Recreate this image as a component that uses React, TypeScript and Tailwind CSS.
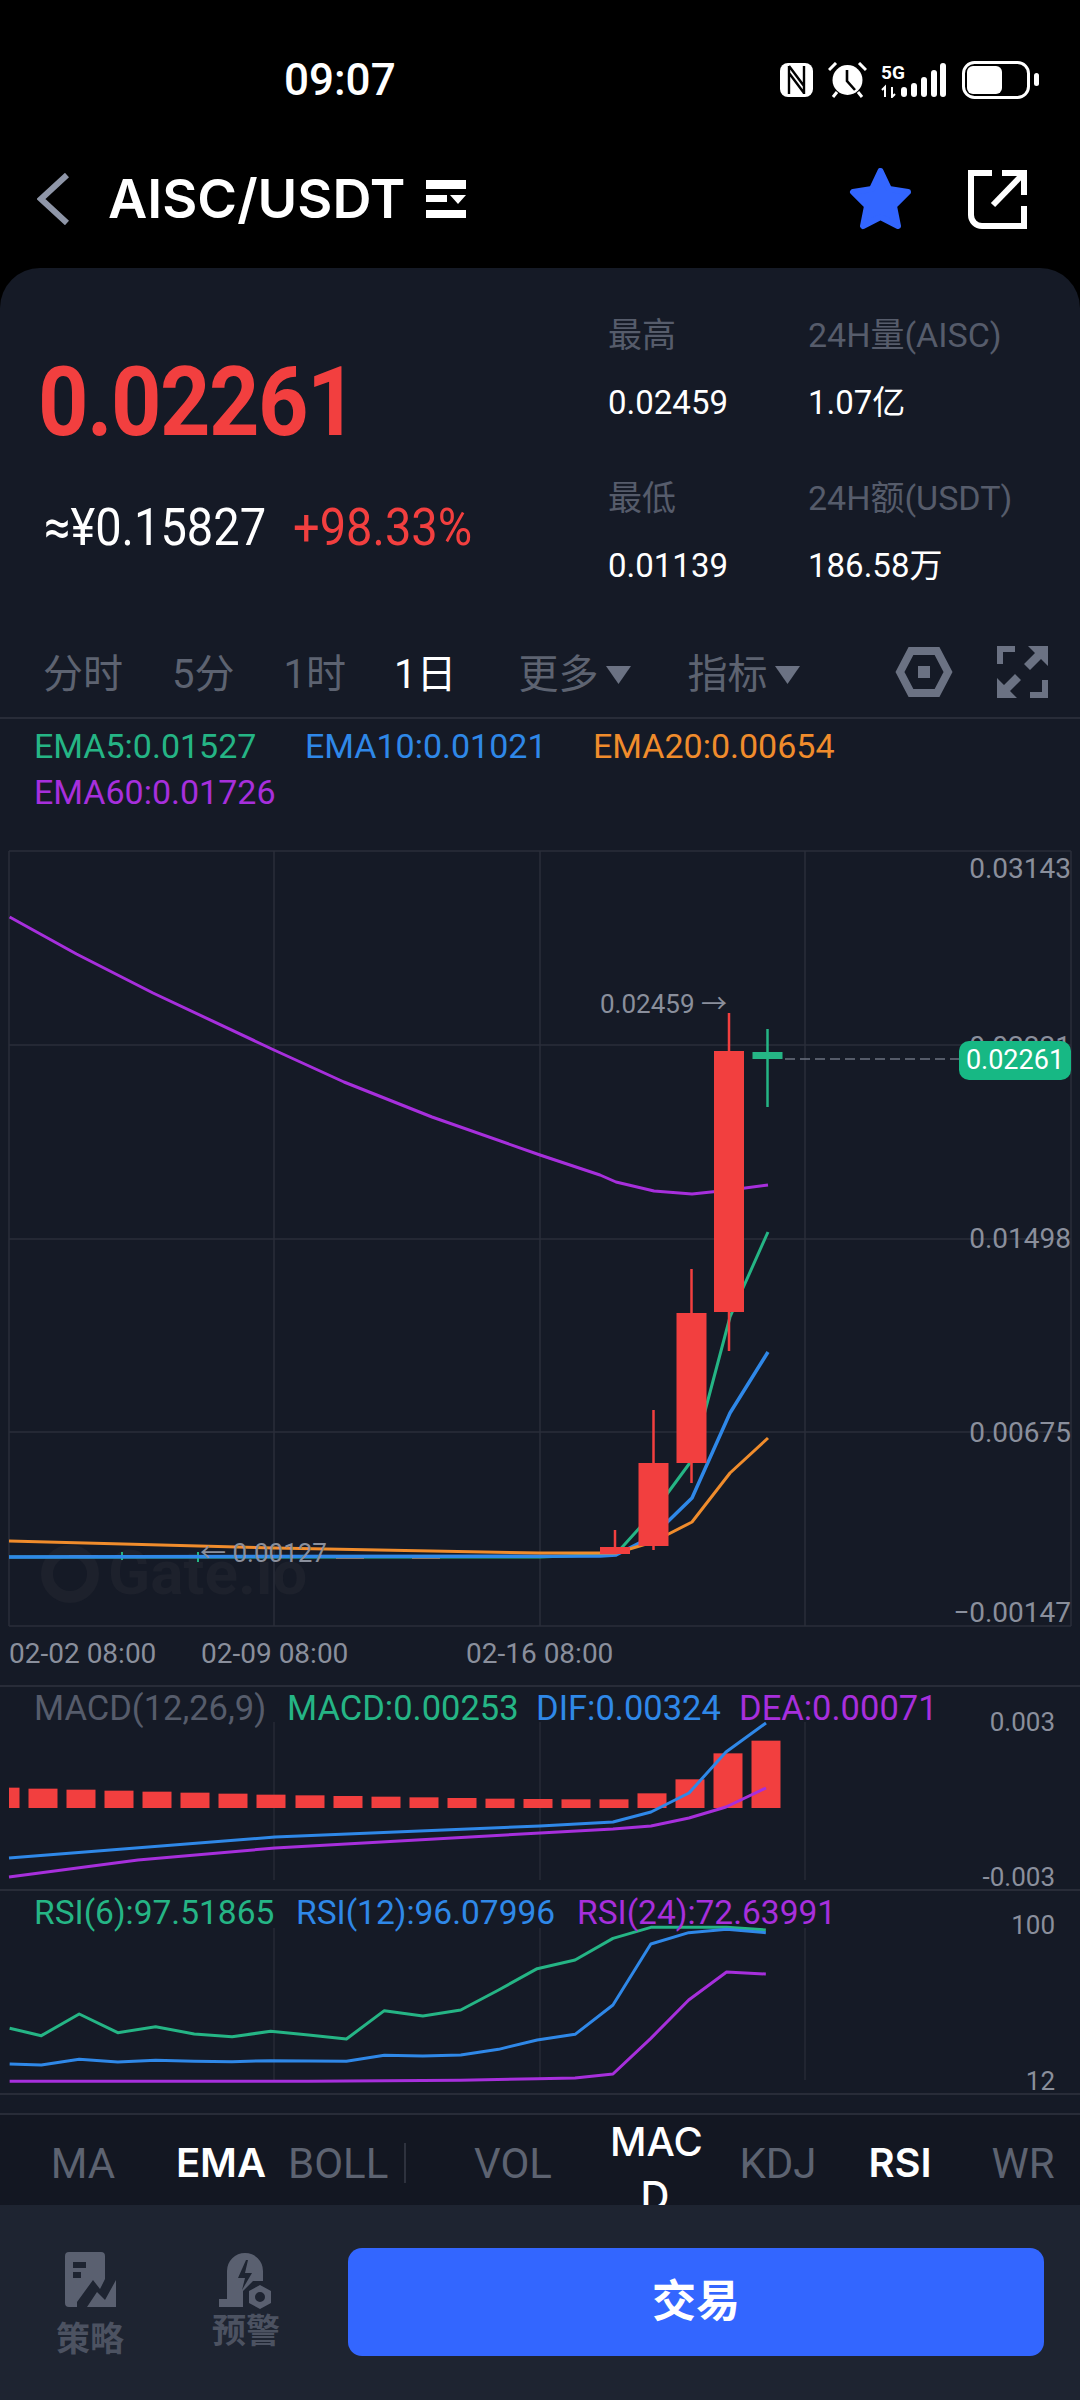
const red = '#f23f3f'
const green = '#25b585'
const blue = '#2f88e8'
const purple = '#a72fdc'
const orange = '#f08c2c'

const periods = [
  { label: '分时', cls: '' },
  { label: '5分', cls: 'ml-[49px]' },
  { label: '1时', cls: 'ml-[49px]' },
  { label: '1日', cls: 'ml-[48px] text-white' },
]
const macdBars = [
  [5, 323], [43, 326], [81, 329], [119, 332], [157, 335], [195, 338], [233, 341], [271, 344], [310, 346], [348, 348],
  [386, 350], [424, 352], [462, 354], [500, 356], [538, 357], [576, 358], [614, 358], [652, 340], [690, 298], [728, 220], [766, 182],
]

// points read off the 1.452 x 3 crop of the lower panels
const lower = (pts: number[][]) => pts.map(([x, y]) => `${x / 1.452},${1680 + y / 3}`).join(' ')

const rsiGreen = lower([[14, 1045], [60, 1067], [115, 1002], [171, 1058], [226, 1040], [282, 1062], [337, 1070], [393, 1054], [448, 1065], [503, 1077], [558, 992], [614, 1008], [669, 990], [724, 930], [780, 866], [835, 840], [890, 775], [945, 742], [1000, 742], [1055, 742], [1112, 750]])
const rsiBlue = lower([[14, 1152], [60, 1155], [115, 1138], [171, 1146], [226, 1141], [282, 1144], [337, 1145], [393, 1142], [448, 1143], [503, 1144], [558, 1126], [614, 1128], [669, 1125], [724, 1108], [780, 1080], [835, 1063], [890, 975], [945, 792], [1000, 758], [1055, 748], [1112, 758]])
const rsiPurple = lower([[14, 1204], [448, 1204], [669, 1201], [780, 1196], [835, 1194], [890, 1182], [945, 1075], [1000, 960], [1055, 876], [1112, 882]])

function StatusIcons() {
  return (
    <div className="ml-auto flex items-center pr-[41px]">
      <svg width="33" height="34" viewBox="0 0 33 34">
        <rect width="33" height="34" rx="8" fill="#fff" />
        <path d="M9 3V31M24 3V31M9 10L24 30M9 3L24 23" stroke="#000" strokeWidth="2.4" fill="none" />
      </svg>
      <svg className="ml-[15px]" width="39" height="36" viewBox="0 0 39 36">
        <circle cx="19.5" cy="18" r="15" fill="#fff" />
        <path d="M19 8V19L27 28" stroke="#000" strokeWidth="2.6" fill="none" />
        <path d="M1 8L8 1M31 1L38 8M5 35L9 30M30 30L34 35" stroke="#fff" strokeWidth="3" fill="none" />
      </svg>
      <svg className="ml-[14px]" width="65" height="36" viewBox="0 0 65 36">
        <text x="0" y="17" fill="#fff" fontSize="19" fontWeight="700" fontFamily="Roboto, sans-serif">5G</text>
        <path d="M4 35V25L1 28M11 25V35L14 32" stroke="#fff" strokeWidth="2" fill="none" />
        <rect x="20" y="25" width="6" height="10" rx="3" fill="#fff" />
        <rect x="30" y="21" width="6" height="14" rx="3" fill="#fff" />
        <rect x="40" y="15" width="6" height="20" rx="3" fill="#fff" />
        <rect x="50" y="8" width="6" height="27" rx="3" fill="#fff" />
        <rect x="59" y="1" width="6" height="34" rx="3" fill="#fff" />
      </svg>
      <svg className="ml-[16px]" width="77" height="38" viewBox="0 0 77 38">
        <rect x="1.5" y="1.5" width="65" height="35" rx="11" fill="none" stroke="#fff" strokeWidth="3" />
        <rect x="5" y="5" width="35" height="28" rx="6" fill="#fff" />
        <rect x="72" y="12" width="5" height="13" rx="2.5" fill="#fff" />
      </svg>
    </div>
  )
}

function StatusBar() {
  return (
    <div className="h-[130px] pt-[30px] flex items-center">
      <span className="pl-[284px] text-[44px] font-medium text-white font-['Roboto',sans-serif]">09:07</span>
      <StatusIcons />
    </div>
  )
}

function Header() {
  return (
    <div className="h-[138px] flex items-center pl-[37px] pr-[53px]">
      <svg width="32" height="52" viewBox="0 0 32 52">
        <path d="M30 2L4 26L30 50" stroke="#8f96a8" strokeWidth="6" fill="none" />
      </svg>
      <span className="ml-[39px] w-[298px] text-[54px] leading-none font-semibold text-white font-['Inter',sans-serif] whitespace-nowrap">AISC/USDT</span>
      <svg className="ml-[20px]" width="40" height="40" viewBox="0 0 40 40">
        <path d="M0 1H40V10H0ZM0 16H21V23H0ZM24 16H40L32 25ZM0 31H40V39H0Z" fill="#fff" />
      </svg>
      <svg className="ml-auto" width="65" height="63" viewBox="0 0 65 63">
        <path d="M32.5 3L41 21L60 24L46 38L50 58L32.5 49L15 58L19 38L5 24L24 21Z" fill="#3366ff" stroke="#3366ff" strokeWidth="6" strokeLinejoin="round" />
      </svg>
      <svg className="ml-[55px]" width="59" height="59" viewBox="0 0 59 59">
        <path d="M24 3H3V45A11 11 0 0 0 14 56H56V36" stroke="#fff" strokeWidth="6" fill="none" />
        <path d="M34 3H56V25" stroke="#fff" strokeWidth="6" fill="none" />
        <path d="M56 3L25 35" stroke="#fff" strokeWidth="6" fill="none" />
      </svg>
    </div>
  )
}

function Stat({ label, value }: { label: string; value: string }) {
  return (
    <div className="w-[200px]">
      <div className="h-[40px] leading-[40px] text-[34px] text-[#565c6b] whitespace-nowrap">{label}</div>
      <div className="mt-[28px] h-[40px] leading-[40px] text-[33px] text-white whitespace-nowrap">{value}</div>
    </div>
  )
}

function PriceSection() {
  return (
    <div className="h-[352px] flex">
      <div className="w-[608px] pl-[38px]">
        <div className="mt-[84px] h-[100px] leading-[100px] text-[88px] font-bold tracking-[-1.5px] scale-y-110" style={{ color: red }}>0.02261</div>
        <div className="mt-[50px] h-[50px] leading-[50px] pl-[6px] flex text-[47px] scale-y-110">
          <span className="text-white w-[249px] whitespace-nowrap">≈¥0.15827</span>
          <span style={{ color: red }}>+98.33%</span>
        </div>
      </div>
      <div className="pt-[47px] flex flex-col gap-[55px]">
        <div className="flex">
          <Stat label="最高" value="0.02459" />
          <Stat label="24H量(AISC)" value="1.07亿" />
        </div>
        <div className="flex">
          <Stat label="最低" value="0.01139" />
          <Stat label="24H额(USDT)" value="186.58万" />
        </div>
      </div>
    </div>
  )
}

function Caret() {
  return (
    <svg className="ml-[8px]" width="25" height="18" viewBox="0 0 25 18">
      <path d="M0 0H25L12.5 18Z" fill="#6b7283" />
    </svg>
  )
}

function PeriodTabs() {
  return (
    <div className="h-[99px] pt-[6px] pl-[43px] pr-[32px] flex items-center border-b-2 border-[#282c38] text-[#5d6371]">
      <div className="flex items-center text-[40px] pt-[6px]">
        {periods.map(p => (
          <span key={p.label} className={p.cls}>{p.label}</span>
        ))}
        <span className="ml-[62px]">更多</span>
        <Caret />
        <span className="ml-[56px]">指标</span>
        <Caret />
      </div>
      <svg className="ml-auto" width="58" height="50" viewBox="0 0 58 50">
        <path d="M16 4H42L53 25L42 46H16L5 25Z" fill="none" stroke="#6b7283" strokeWidth="8" />
        <rect x="23" y="19" width="12" height="12" fill="#6b7283" />
      </svg>
      <svg className="ml-[44px]" width="51" height="52" viewBox="0 0 51 52">
        <path d="M18 3H3V18M33 49H48V34" fill="none" stroke="#6b7283" strokeWidth="6" />
        <path d="M31 0H51V20L44 13L33 24L27 18L38 7Z" fill="#6b7283" />
        <path d="M20 52H0V32L7 39L18 28L24 34L13 45Z" fill="#6b7283" />
      </svg>
    </div>
  )
}

function Legend() {
  return (
    <div className="h-[106px] pt-[4px] pl-[34px] text-[34px]">
      <div className="h-[46px] leading-[46px] flex">
        <span className="w-[271px]" style={{ color: green }}>EMA5:0.01527</span>
        <span className="w-[288px]" style={{ color: blue }}>EMA10:0.01021</span>
        <span style={{ color: orange }}>EMA20:0.00654</span>
      </div>
      <div className="h-[46px] leading-[46px]" style={{ color: purple }}>EMA60:0.01726</div>
    </div>
  )
}

function Candle({ x, w1, w2, b1, b2, color }: { x: number; w1: number; w2: number; b1: number; b2: number; color: string }) {
  return (
    <g>
      <line x1={x} x2={x} y1={w1} y2={w2} stroke={color} strokeWidth="2.5" />
      <rect x={x - 15} y={b1} width="30" height={b2 - b1} fill={color} />
    </g>
  )
}

function KlineChart() {
  const label = 'absolute right-[9px] h-[36px] leading-[36px] text-[28px] text-[#8a8f9c]'
  return (
    <div className="relative h-[810px]">
      <div className="absolute left-[108px] top-[718px] h-[60px] leading-[60px] text-[62px] font-bold text-[#1d212c]">Gate.io</div>
      <svg className="absolute inset-0" width="1080" height="810" viewBox="0 825 1080 810" strokeLinejoin="round">
        <circle cx="70" cy="1574" r="23" fill="none" stroke="#1d212c" strokeWidth="12" />
        <g stroke="#2a2e3a" strokeWidth="1.5">
          <path d="M9 851H1071M9 1045H1071M9 1239H1071M9 1432H1071M9 1626H1071" />
          <path d="M9 851V1626M274 851V1626M540 851V1626M805 851V1626M1071 851V1626" />
        </g>
        <rect x="69" y="1555" width="29" height="3" fill={red} />
        <line x1="122" x2="122" y1="1552" y2="1560" stroke={green} strokeWidth="2" />
        <line x1="198" x2="198" y1="1552" y2="1562" stroke={green} strokeWidth="2" />
        <rect x="336" y="1556" width="28" height="3" fill={red} />
        <rect x="412" y="1556" width="28" height="3" fill={red} />
        <polyline points="9.6,917 76.5,954 153,993 274,1050 344,1082 432,1117 540,1155 600,1175 616,1182 654,1191 692,1194 730,1190 768,1185" fill="none" stroke={purple} strokeWidth="3" />
        <polyline points="9,1557 540,1557 616,1554 653,1513 692,1460 730,1317 768,1232" fill="none" stroke={green} strokeWidth="3" />
        <polyline points="9,1557 600,1556 616,1555 653,1536 692,1498 730,1413 768,1352" fill="none" stroke={blue} strokeWidth="3.5" />
        <polyline points="9,1541 274,1548 540,1553 616,1553 653,1542 692,1522 730,1473 768,1438" fill="none" stroke={orange} strokeWidth="3" />
        <Candle x={615} w1={1530} w2={1554} b1={1547} b2={1554} color={red} />
        <Candle x={653.5} w1={1410} w2={1550} b1={1463} b2={1546} color={red} />
        <Candle x={691.5} w1={1269} w2={1483} b1={1313} b2={1463} color={red} />
        <Candle x={729} w1={1013} w2={1351} b1={1051} b2={1312} color={red} />
        <Candle x={767.5} w1={1029} w2={1107} b1={1052} b2={1059} color={green} />
        <line x1="785" x2="960" y1="1059" y2="1059" stroke="#6b7280" strokeWidth="1.5" strokeDasharray="10 5" />
      </svg>
      <span className={`${label} top-[26px]`}>0.03143</span>
      <span className={`${label} top-[204px]`}>0.02221</span>
      <span className={`${label} top-[396px]`}>0.01498</span>
      <span className={`${label} top-[590px]`}>0.00675</span>
      <span className={`${label} top-[770px]`}>−0.00147</span>
      <span className="absolute left-[600px] top-[161px] h-[36px] leading-[36px] text-[26px] text-[#8a8f9c] whitespace-nowrap">0.02459 →</span>
      <span className="absolute left-[200px] top-[710px] h-[36px] leading-[36px] text-[26px] text-[#8a8f9c] whitespace-nowrap">← 0.00127</span>
      <span className="absolute left-[959px] top-[216px] w-[112px] h-[39px] leading-[39px] rounded-[10px] text-center text-[27px] text-white bg-[#17b884]">0.02261</span>
    </div>
  )
}

function DateAxis() {
  return (
    <div className="h-[52px] pb-[12px] pl-[9px] flex items-center border-b-2 border-[#282c38] text-[28px] text-[#8a8f9c]">
      <span className="w-[192px]">02-02 08:00</span>
      <span className="w-[265px]">02-09 08:00</span>
      <span>02-16 08:00</span>
    </div>
  )
}

function MacdPanel() {
  const bar = 'absolute right-[25px] h-[36px] leading-[36px] text-[26px] text-[#8a8f9c]'
  return (
    <div className="relative h-[202px] border-b-2 border-[#282c38] box-content">
      <svg className="absolute inset-0" width="1080" height="202" viewBox="0 1687 1080 202" strokeLinejoin="round">
        <path d="M274 1722V1880M540 1722V1880M805 1722V1880" stroke="#262a36" strokeWidth="1.5" />
        {macdBars.map(([x, top]) => {
          const y = 1680 + top / 3
          const left = Math.max(x - 14.5, 9)
          return <rect key={x} x={left} y={y} width={x + 14.5 - left} height={1808 - y} fill={red} />
        })}
        <polyline points="9,1858 275,1837 540,1826 613,1822 651,1812 689,1793 726,1752 766,1723" fill="none" stroke={blue} strokeWidth="3" />
        <polyline points="9,1877 138,1860 275,1848 540,1833 613,1829 651,1826 689,1818 726,1807 766,1788" fill="none" stroke={purple} strokeWidth="3" />
      </svg>
      <div className="relative h-[42px] leading-[42px] pl-[34px] flex text-[34.5px] whitespace-nowrap">
        <span className="w-[253px] text-[#565c6b]">MACD(12,26,9)</span>
        <span className="w-[249px]" style={{ color: green }}>MACD:0.00253</span>
        <span className="w-[203px]" style={{ color: blue }}>DIF:0.00324</span>
        <span style={{ color: purple }}>DEA:0.00071</span>
      </div>
      <span className={`${bar} top-[17px]`}>0.003</span>
      <span className={`${bar} top-[172px]`}>-0.003</span>
    </div>
  )
}

function RsiPanel() {
  const bar = 'absolute right-[25px] h-[36px] leading-[36px] text-[26px] text-[#8a8f9c]'
  return (
    <div className="relative h-[202px] border-b-2 border-[#282c38] box-content">
      <svg className="absolute inset-0" width="1080" height="202" viewBox="0 1891 1080 202" strokeLinejoin="round">
        <path d="M274 1928V2080M540 1928V2080M805 1928V2080" stroke="#262a36" strokeWidth="1.5" />
        <polyline points={rsiPurple} fill="none" stroke={purple} strokeWidth="3" />
        <polyline points={rsiGreen} fill="none" stroke={green} strokeWidth="3" />
        <polyline points={rsiBlue} fill="none" stroke={blue} strokeWidth="3" />
      </svg>
      <div className="relative h-[44px] leading-[44px] pl-[34px] flex text-[33.5px] whitespace-nowrap">
        <span className="w-[262px]" style={{ color: green }}>RSI(6):97.51865</span>
        <span className="w-[281px]" style={{ color: blue }}>RSI(12):96.07996</span>
        <span style={{ color: purple }}>RSI(24):72.63991</span>
      </div>
      <span className={`${bar} top-[16px]`}>100</span>
      <span className={`${bar} top-[172px]`}>12</span>
    </div>
  )
}

function IndicatorTabs() {
  const cell = 'h-[90px] pt-[6px] flex items-center justify-center'
  const off = 'text-[42px] text-[#5d6371]'
  const on = "text-[40px] font-semibold text-white font-['Inter',sans-serif]"
  return (
    <div className="mt-[18px] h-[92px] border-t-2 border-[#282c38] flex overflow-hidden bg-[#131722] whitespace-nowrap">
      <div className={`${cell} ${off} w-[166px]`}>MA</div>
      <div className={`${cell} ${on} w-[110px]`}>EMA</div>
      <div className="h-[90px] w-[132px] pt-[6px] pl-[12px] flex items-center text-[42px] text-[#5d6371]">
        BOLL
        <span className="ml-[16px] h-[40px] w-[2px] bg-[#2e323e]" />
      </div>
      <div className={`${cell} ${off} w-[202px] pl-[8px]`}>VOL</div>
      <div className="w-[90px] text-center text-[40px] leading-[54px] font-medium text-white font-['Inter',sans-serif]">
        MAC<br />D
      </div>
      <div className={`${cell} ${off} w-[156px]`}>KDJ</div>
      <div className={`${cell} ${on} w-[88px]`}>RSI</div>
      <div className={`${cell} ${off} w-[136px] pl-[22px]`}>WR</div>
    </div>
  )
}

function Footer() {
  return (
    <div className="flex-1 bg-[#1e2431] flex pt-[43px] pl-[56px] pr-[36px] text-[#4c5261] font-bold text-[34px] leading-[36px]">
      <div className="w-[68px] flex flex-col items-center pt-[4px]">
        <svg width="51" height="55" viewBox="0 0 51 55">
          <path d="M4 0H36a4 4 0 0 1 4 4V27L35 37L28 28L12 50V55H4a4 4 0 0 1-4-4V4a4 4 0 0 1 4-4Z" fill="#5a6070" />
          <rect x="8" y="10" width="13" height="6" fill="#1e2431" />
          <rect x="8" y="20" width="8" height="6" fill="#1e2431" />
          <path d="M22 55L32 40L40 48L51 28V55Z" fill="#5a6070" />
        </svg>
        <span className="mt-[14px]">策略</span>
      </div>
      <div className="ml-[88px] w-[68px] flex flex-col items-center pt-[3px]">
        <svg width="54" height="58" viewBox="0 0 54 58">
          <path d="M8 20a18 18 0 0 1 36 0V30H34L24 40V56H0V48H8Z" fill="#5a6070" />
          <path d="M27 9L19 27H26L23 39L33 22H26L29 9Z" fill="#1e2431" />
          <path d="M41 34L52 40V52L41 58L30 52V40ZM41 41A5 5 0 1 0 41 51A5 5 0 1 0 41 41Z" fill="#5a6070" fillRule="evenodd" />
        </svg>
        <span className="mt-[4px]">预警</span>
      </div>
      <button className="ml-[68px] w-[696px] h-[108px] rounded-[14px] bg-[#3366ff] text-white text-[44px]">交易</button>
    </div>
  )
}

export default function App() {
  return (
    <div className="w-[1080px] h-[2400px] bg-black overflow-hidden flex flex-col font-['Roboto','Noto_Sans_CJK_SC',sans-serif]">
      <StatusBar />
      <Header />
      <div className="flex-1 flex flex-col bg-[#151a26] rounded-t-[40px] overflow-hidden">
        <PriceSection />
        <PeriodTabs />
        <Legend />
        <KlineChart />
        <DateAxis />
        <MacdPanel />
        <RsiPanel />
        <IndicatorTabs />
        <Footer />
      </div>
    </div>
  )
}
